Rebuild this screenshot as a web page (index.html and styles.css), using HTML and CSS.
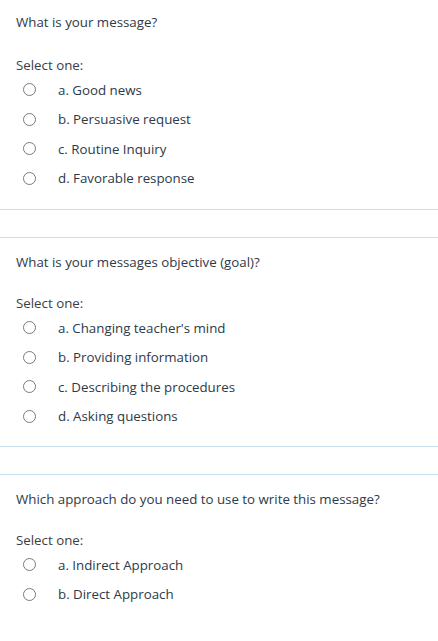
FILE: index.html
```html
<!DOCTYPE html>
<html lang="en">
<head>
<meta charset="utf-8">
<title>Quiz</title>
<link rel="stylesheet" href="styles.css">
</head>
<body>
<div class="quiz">
  <section class="que first">
    <div class="qtext">What is your message?</div>
    <div class="prompt">Select one:</div>
    <div class="answer">
      <label class="opt"><span class="radio"></span><span class="label">a. Good news</span></label>
      <label class="opt"><span class="radio"></span><span class="label">b. Persuasive request</span></label>
      <label class="opt"><span class="radio"></span><span class="label">c. Routine Inquiry</span></label>
      <label class="opt"><span class="radio"></span><span class="label">d. Favorable response</span></label>
    </div>
  </section>
  <section class="que">
    <div class="qtext">What is your messages objective (goal)?</div>
    <div class="prompt">Select one:</div>
    <div class="answer">
      <label class="opt"><span class="radio"></span><span class="label">a. Changing teacher's mind</span></label>
      <label class="opt"><span class="radio"></span><span class="label">b. Providing information</span></label>
      <label class="opt"><span class="radio"></span><span class="label">c. Describing the procedures</span></label>
      <label class="opt"><span class="radio"></span><span class="label">d. Asking questions</span></label>
    </div>
  </section>
  <section class="que last">
    <div class="qtext">Which approach do you need to use to write this message?</div>
    <div class="prompt">Select one:</div>
    <div class="answer">
      <label class="opt"><span class="radio"></span><span class="label">a. Indirect Approach</span></label>
      <label class="opt"><span class="radio"></span><span class="label">b. Direct Approach</span></label>
    </div>
  </section>
</div>
</body>
</html>
```
FILE: styles.css
```css
html, body {
  margin: 0;
  padding: 0;
  background: #ffffff;
}
body {
  font-family: "Open Sans", "Noto Sans", sans-serif;
  font-size: 13.3px;
  color: #2d3a48;
}
.quiz {
  display: flex;
  flex-direction: column;
  gap: 27px;
}
.que {
  padding: 14px 16px 15px 16px;
  border-top: 1px solid #c9dfec;
  border-bottom: 1px solid #c9dfec;
}
.que.first {
  border-top: none;
  padding-top: 12px;
  padding-bottom: 16px;
}
.que.last {
  border-bottom: none;
}
.qtext {
  line-height: 20px;
  margin-bottom: 21px;
}
.que.first .qtext {
  margin-bottom: 23px;
}
.prompt {
  line-height: 20px;
  color: #3a3e42;
}
.answer {
  display: flex;
  flex-direction: column;
}
.opt {
  display: flex;
  align-items: center;
  height: 29.5px;
}
.radio {
  box-sizing: border-box;
  width: 13px;
  height: 13px;
  border: 1px solid #7a7a7a;
  border-radius: 50%;
  margin-left: 7px;
  margin-right: 22px;
  background: #fff;
}
.label {
  line-height: 20px;
}
```
